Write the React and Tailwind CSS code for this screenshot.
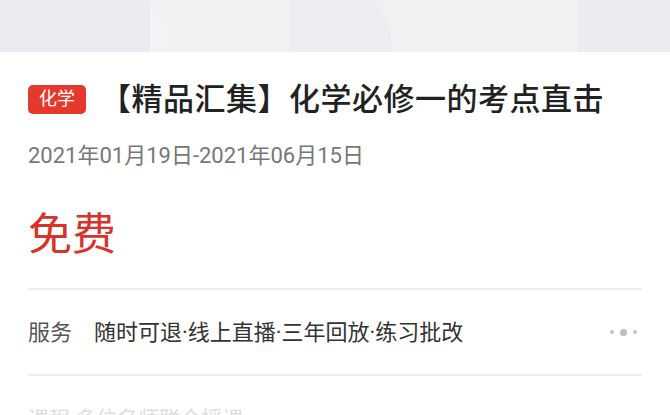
export default function App() {
  const font = { fontFamily: 'Roboto, "Noto Sans CJK SC", "Noto Sans", sans-serif' };
  return (
    <div className="w-[670px] h-[415px] overflow-hidden bg-white" style={font}>
      <div className="relative h-[52px] bg-[#f1f1f3] overflow-hidden">
        <svg className="absolute inset-0" width="670" height="52" viewBox="0 0 670 52">
          <path d="M0 0 H150 L178 40 L162 52 H0 Z" fill="#ebebf2" />
          <path d="M150 0 L178 40 L162 52 H150 Z" fill="#f3f3f6" />
          <path d="M290 0 H372 Q392 20 392 52 H290 Z" fill="#ececf1" />
          <path d="M578 0 H670 V52 H578 Z" fill="#ebecf0" />
        </svg>
      </div>
      <div className="px-[28px]">
        <div className="mt-[25px] flex h-[44px] items-center">
          <span className="flex h-[29px] w-[58px] items-center justify-center rounded-[5px] bg-[#e5392e] text-[18px] leading-none text-white">
            化学
          </span>
          <span className="ml-[14px] text-[31px] font-medium leading-none tracking-[0.5px] text-[#222]">
            【精品汇集】化学必修一的考点直击
          </span>
        </div>
        <div className="mt-[20px] h-[30px] text-[22px] leading-[30px] text-[#777]">
          2021年01月19日-2021年06月15日
        </div>
        <div className="mt-[36px] h-[56px] text-[44px] leading-[56px] text-[#d8332a]">免费</div>
        <div className="mt-[25px] h-[2px] bg-[#ededed]" />
        <div className="flex h-[84px] items-center">
          <span className="text-[22px] text-[#555]">服务</span>
          <span className="ml-[22px] text-[22px] text-[#333]">随时可退·线上直播·三年回放·练习批改</span>
          <div className="ml-auto mr-[5px] flex items-center gap-[6px]">
            <span className="h-[4px] w-[4px] rounded-full bg-[#c4c4c4]" />
            <span className="h-[7px] w-[7px] rounded-full bg-[#bdbdbd]" />
            <span className="h-[4px] w-[4px] rounded-full bg-[#c4c4c4]" />
          </div>
        </div>
        <div className="h-[2px] bg-[#ededed]" />
        <div className="mt-[28px] text-[21px] leading-[30px] text-[#ddd]">课程 多位名师联合授课</div>
      </div>
    </div>
  );
}
